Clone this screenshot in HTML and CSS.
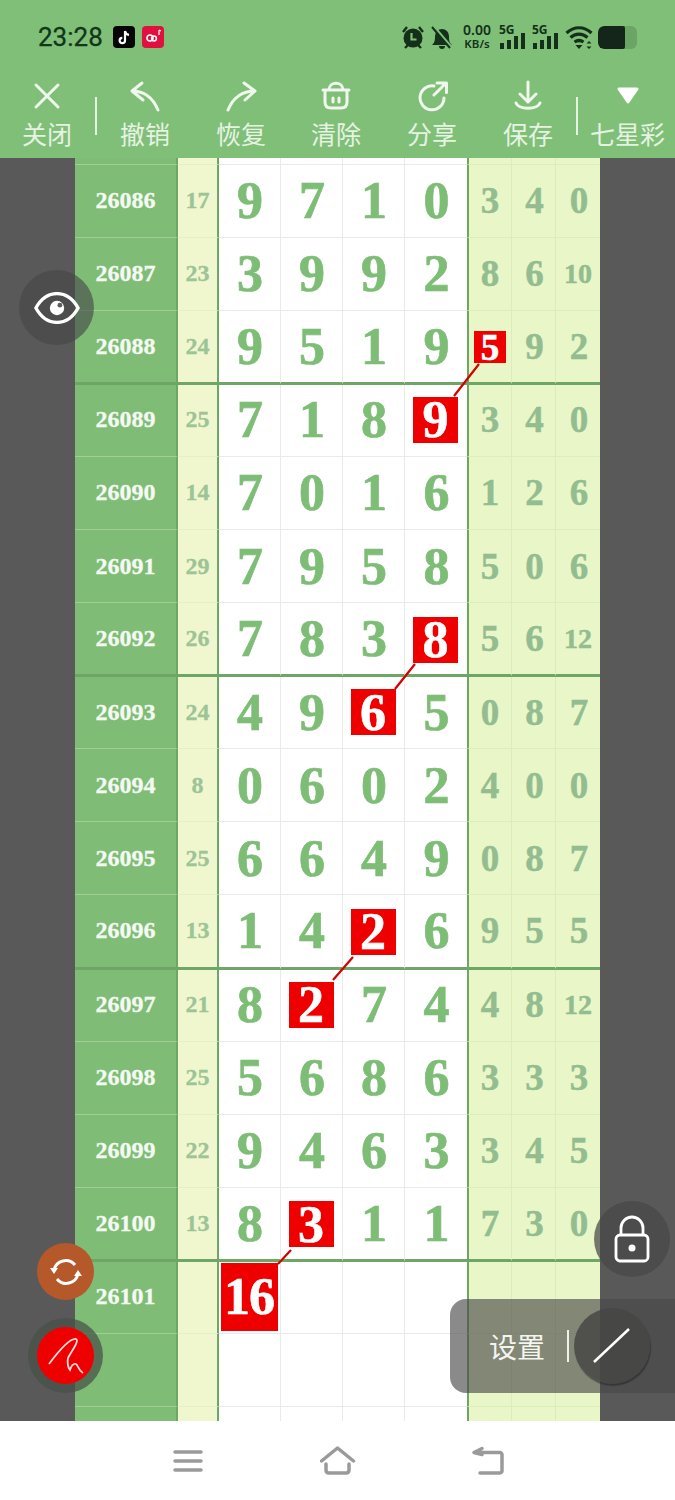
FILE: index.html
```html
<!DOCTYPE html>
<html lang="zh">
<head>
<meta charset="utf-8">
<title>七星彩</title>
<link rel="stylesheet" href="styles.css">
</head>
<body>
<div class="page">
  <header class="head">
    <div class="status">
      <span class="time">23:28</span>
      <svg class="app app-first" viewBox="0 0 22 22"><rect width="22" height="22" rx="4" fill="#050505"/><path d="M12 5v9.5a2.7 2.7 0 1 1-2.7-2.7M12 5c.3 2.3 1.7 3.6 4 3.9" fill="none" stroke="#fff" stroke-width="2.2"/></svg>
      <svg class="app" viewBox="0 0 22 22"><rect width="22" height="22" rx="4" fill="#e0103f"/><circle cx="8" cy="12" r="3" fill="none" stroke="#fff" stroke-width="1.5"/><circle cx="12" cy="12.5" r="2.4" fill="none" stroke="#fff" stroke-width="1.5"/><path d="M17 4v5M17 4l2 1" stroke="#fff" stroke-width="1.2" fill="none"/></svg>
      <div class="sys">
        <svg class="s-icon" viewBox="0 0 22 24"><circle cx="11" cy="13" r="9.500" fill="#14301a"/><path d="M9.500 8v6.500h5" stroke="#7fbf78" stroke-width="2.200" fill="none"/><path d="M1 7l4-5M21 7l-4-5M3 23l3-3M19 23l-3-3" stroke="#14301a" stroke-width="2.400"/></svg>
        <svg class="s-icon" viewBox="0 0 22 24"><path d="M1 20c3-3 3-5 3-9a7 7 0 0 1 14 0c0 4 0 6 3 9z" fill="#14301a"/><path d="M8 21h6c0 2-1 3-3 3s-3-1-3-3z" fill="#14301a"/><path d="M3 2l17 20" stroke="#7fbf78" stroke-width="3"/><path d="M1 2l18 21" stroke="#14301a" stroke-width="2"/></svg>
        <div class="speed"><span class="speed-n">0.00</span><span class="speed-u">KB/s</span></div>
        <div class="sig"><span class="sig-t">5G</span><svg class="sig-b" viewBox="0 0 27 16"><path d="M1 10h4v6H1zM8 7h4v9H8zM15 3h4v13h-4zM22 0h4v16h-4z" fill="#14301a"/></svg></div>
        <div class="sig"><span class="sig-t">5G</span><svg class="sig-b" viewBox="0 0 27 16"><path d="M1 10h4v6H1zM8 7h4v9H8zM15 3h4v13h-4zM22 0h4v16h-4z" fill="#14301a"/></svg></div>
        <svg class="wifi" viewBox="0 0 28 24"><path d="M1.500 8c7.500-7 17.500-7 25 0M5.500 12.500c5-4.500 12-4.500 17 0M9.500 17c3-2 6-2 9 0" fill="none" stroke="#14301a" stroke-width="3.200"/><path d="M10.500 20h7l-3.500 4z" fill="#14301a"/><path d="M24 16l2.500 2.500h-5zM24 24l2.500-2.500h-5z" fill="#14301a"/></svg>
        <div class="batt"><div class="batt-fill"></div></div>
      </div>
    </div>
    <nav class="tools">
      <div class="tool"><svg class="t-icon" viewBox="0 0 32 32"><path d="M5 5l22 22M27 5L5 27"/></svg><span class="t-label">关闭</span></div>
      <div class="sep"></div>
      <div class="tool"><svg class="t-icon" viewBox="0 0 32 32"><path d="M13 3L3 11l11 9M3 11c13 0 21 7 26 19"/></svg><span class="t-label">撤销</span></div>
      <div class="tool"><svg class="t-icon" viewBox="0 0 32 32"><path d="M19 3l11 8-10 9M30 11C16 11 8 18 3 30"/></svg><span class="t-label">恢复</span></div>
      <div class="tool"><svg class="t-icon" viewBox="0 0 32 32"><path d="M3 10H29M9 10c0-9 14-9 14 0M5 10v12c0 4 2 6 6 6h10c4 0 6-2 6-6V10M13 18v4M19 18v4"/></svg><span class="t-label">清除</span></div>
      <div class="tool"><svg class="t-icon" viewBox="0 0 32 32"><path d="M18 6A12 12 0 1 0 28 18M30 3L18 15M21 3h9.500v9.500"/></svg><span class="t-label">分享</span></div>
      <div class="tool"><svg class="t-icon" viewBox="0 0 32 32"><path d="M16 2v20M8 14l8 8 8-8M4 23c3 7 21 7 24 0"/></svg><span class="t-label">保存</span></div>
      <div class="sep sep-b"></div>
      <div class="tool"><svg class="t-icon solid" viewBox="0 0 32 32"><path d="M7 9h18l-9 13z"/></svg><span class="t-label">七星彩</span></div>
    </nav>
  </header>

  <main class="chart">
    <div class="side"></div>
    <div class="table">
      <div class="row top"><div class="id"></div><div class="sum"></div><div class="d"></div><div class="d"></div><div class="d"></div><div class="d"></div><div class="r"></div><div class="r"></div><div class="r"></div></div>
      <div class="row"><div class="id">26086</div><div class="sum">17</div><div class="d">9</div><div class="d">7</div><div class="d">1</div><div class="d">0</div><div class="r">3</div><div class="r">4</div><div class="r">0</div></div>
      <div class="row"><div class="id">26087</div><div class="sum">23</div><div class="d">3</div><div class="d">9</div><div class="d">9</div><div class="d">2</div><div class="r">8</div><div class="r">6</div><div class="r two">10</div></div>
      <div class="row thick"><div class="id">26088</div><div class="sum">24</div><div class="d">9</div><div class="d">5</div><div class="d">1</div><div class="d">9</div><div class="r"><span class="hit-s">5</span></div><div class="r">9</div><div class="r">2</div></div>
      <div class="row"><div class="id">26089</div><div class="sum">25</div><div class="d">7</div><div class="d">1</div><div class="d">8</div><div class="d"><span class="hit">9</span></div><div class="r">3</div><div class="r">4</div><div class="r">0</div></div>
      <div class="row"><div class="id">26090</div><div class="sum">14</div><div class="d">7</div><div class="d">0</div><div class="d">1</div><div class="d">6</div><div class="r">1</div><div class="r">2</div><div class="r">6</div></div>
      <div class="row"><div class="id">26091</div><div class="sum">29</div><div class="d">7</div><div class="d">9</div><div class="d">5</div><div class="d">8</div><div class="r">5</div><div class="r">0</div><div class="r">6</div></div>
      <div class="row thick"><div class="id">26092</div><div class="sum">26</div><div class="d">7</div><div class="d">8</div><div class="d">3</div><div class="d"><span class="hit">8</span></div><div class="r">5</div><div class="r">6</div><div class="r two">12</div></div>
      <div class="row"><div class="id">26093</div><div class="sum">24</div><div class="d">4</div><div class="d">9</div><div class="d"><span class="hit">6</span></div><div class="d">5</div><div class="r">0</div><div class="r">8</div><div class="r">7</div></div>
      <div class="row"><div class="id">26094</div><div class="sum">8</div><div class="d">0</div><div class="d">6</div><div class="d">0</div><div class="d">2</div><div class="r">4</div><div class="r">0</div><div class="r">0</div></div>
      <div class="row"><div class="id">26095</div><div class="sum">25</div><div class="d">6</div><div class="d">6</div><div class="d">4</div><div class="d">9</div><div class="r">0</div><div class="r">8</div><div class="r">7</div></div>
      <div class="row thick"><div class="id">26096</div><div class="sum">13</div><div class="d">1</div><div class="d">4</div><div class="d"><span class="hit">2</span></div><div class="d">6</div><div class="r">9</div><div class="r">5</div><div class="r">5</div></div>
      <div class="row"><div class="id">26097</div><div class="sum">21</div><div class="d">8</div><div class="d"><span class="hit">2</span></div><div class="d">7</div><div class="d">4</div><div class="r">4</div><div class="r">8</div><div class="r two">12</div></div>
      <div class="row"><div class="id">26098</div><div class="sum">25</div><div class="d">5</div><div class="d">6</div><div class="d">8</div><div class="d">6</div><div class="r">3</div><div class="r">3</div><div class="r">3</div></div>
      <div class="row"><div class="id">26099</div><div class="sum">22</div><div class="d">9</div><div class="d">4</div><div class="d">6</div><div class="d">3</div><div class="r">3</div><div class="r">4</div><div class="r">5</div></div>
      <div class="row thick"><div class="id">26100</div><div class="sum">13</div><div class="d">8</div><div class="d"><span class="hit">3</span></div><div class="d">1</div><div class="d">1</div><div class="r">7</div><div class="r">3</div><div class="r">0</div></div>
      <div class="row"><div class="id">26101</div><div class="sum"></div><div class="d"><span class="hit-b">16</span></div><div class="d"></div><div class="d"></div><div class="d"></div><div class="r"></div><div class="r"></div><div class="r"></div></div>
      <div class="row"><div class="id"></div><div class="sum"></div><div class="d"></div><div class="d"></div><div class="d"></div><div class="d"></div><div class="r"></div><div class="r"></div><div class="r"></div></div>
      <div class="row"><div class="id"></div><div class="sum"></div><div class="d"></div><div class="d"></div><div class="d"></div><div class="d"></div><div class="r"></div><div class="r"></div><div class="r"></div></div>
    </div>
    <div class="side"></div>
    <svg class="links" viewBox="0 0 675 1263"><path d="M479 206L454 238M415 506L395 531M353 799L333 822M291 1092L278 1106"/></svg>
  </main>

  <footer class="nav">
    <svg class="nav-icon" viewBox="0 0 36 36"><path d="M5 9h26M5 18h26M5 27h26"/></svg>
    <svg class="nav-icon" viewBox="0 0 36 36"><path d="M1.500 18L17.500 5l16 13M6 21v6c0 2 1 3 3 3h17c2 0 3-1 3-3v-6"/></svg>
    <svg class="nav-icon" viewBox="0 0 36 36"><path d="M6 9.500H32c1 0 2 1 2 2V28c0 1-1 2-2 2H12M14 5.500L6 9.500l8 2"/></svg>
  </footer>

  <div class="fab fab-eye"><svg viewBox="0 0 48 32" class="eye"><path d="M2 16C13-4 35-4 46 16 35 36 13 36 2 16z" fill="none" stroke="#fff" stroke-width="3.500"/><circle cx="24" cy="16" r="7.500" fill="#fff"/><circle cx="27" cy="13" r="2.500" fill="#5c5c5c"/></svg></div>
  <div class="fab fab-lock"><svg viewBox="0 0 36 48" class="lock"><path d="M7 20V13a11 11 0 0 1 22 0v7" fill="none" stroke="#fff" stroke-width="2.800"/><rect x="2" y="20" width="32" height="26" rx="4" fill="none" stroke="#fff" stroke-width="2.800"/><circle cx="18" cy="33" r="3.500" fill="#fff"/></svg></div>
  <div class="fab fab-sync"><svg viewBox="0 0 32 32" class="sync"><path d="M4 14A12 12 0 0 1 25 9M28 18A12 12 0 0 1 7 23" fill="none" stroke="#fff" stroke-width="3"/><path d="M0 12h8l-4 6zM32 20h-8l4-6z" fill="#fff"/></svg></div>
  <div class="fab fab-pen"><div class="pen-in"><svg viewBox="0 0 56 56" class="pen"><path d="M11 36C20 24 32 10 38 11c4 2-6 14-8 19-1 4 0 10 2 12 1-3 2-7 6-6 2 1 2 6 7 9" fill="none" stroke="#ffdcdc" stroke-width="1.800"/></svg></div></div>
  <div class="panel">
    <span class="panel-t">设置</span>
    <span class="panel-sep"></span>
    <div class="panel-btn"><svg viewBox="0 0 76 76" class="slash"><path d="M20 54L55 21" stroke="#fff" stroke-width="2.500"/></svg></div>
  </div>
</div>
</body>
</html>
```

FILE: styles.css
```css
* { box-sizing: border-box; }
html, body { margin: 0; padding: 0; }
body { background: #fff; font-family: "Noto Sans", "Noto Sans CJK SC", sans-serif; }
.page { position: relative; width: 675px; height: 1500px; overflow: hidden; display: flex; flex-direction: column; }

.head { height: 158px; background: #80bf78; flex: none; }
.status { height: 72px; padding: 0 38px; display: flex; align-items: center; }
.time { font: 400 26px Roboto, sans-serif; color: #12361a; line-height: 1; margin-top: 2px; width: 66px; -webkit-text-stroke: .3px #12361a; }
.app { width: 22px; height: 22px; margin-left: 7px; margin-top: 2px; }
.app-first { margin-left: 9px; }
.sys { margin-left: auto; display: flex; align-items: center; margin-top: 2px; }
.s-icon { width: 22px; height: 24px; margin-right: 7px; }
.speed { width: 30px; margin-left: 2px; margin-right: 7px; margin-top: -3px; display: flex; flex-direction: column; align-items: center; color: #14301a; font-family: "Noto Sans", sans-serif; line-height: 1; }
.speed-n { font-size: 14px; font-weight: 600; line-height: 15px; }
.speed-u { font-size: 11.500px; font-weight: 600; line-height: 13px; }
.sig { width: 27px; height: 24px; margin-right: 6px; position: relative; }
.sig-t { position: absolute; left: 0; top: -1px; font: 700 12px/12px "Noto Sans", sans-serif; color: #14301a; }
.sig-b { position: absolute; left: 0; bottom: 0; width: 27px; height: 16px; }
.wifi { width: 28px; height: 24px; margin-right: 5px; }
.batt { width: 39px; height: 23px; border-radius: 6px; background: #6aa565; overflow: hidden; }
.batt-fill { width: 27px; height: 100%; background: #14261a; border-radius: 6px 2px 2px 6px; }

.tools { height: 86px; display: grid; grid-template-columns: 94px 4px 94px 98px 92px 100px 92px 6px 95px; }
.tool { display: flex; flex-direction: column; align-items: center; padding-top: 8px; }
.t-icon { width: 32px; height: 32px; fill: none; stroke: #eff8ec; stroke-width: 3; stroke-linecap: round; stroke-linejoin: round; }
.t-icon.solid { fill: #fff; stroke: #fff; stroke-width: 3; }
.t-label { font: 400 25px/32px "Noto Sans CJK SC", sans-serif; color: #e6f3e3; margin-top: 5px; white-space: nowrap; }
.sep { width: 2px; height: 38px; margin-top: 25px; background: #e6f3e3; justify-self: center; }

.chart { position: relative; z-index: 0; height: 1263px; flex: none; display: flex; overflow: hidden; background: #595959; }
.side { flex: 1; }
.side:first-child { flex: none; width: 75px; }
.table { width: 525px; flex: none; display: flex; flex-direction: column; }
.row { display: grid; grid-template-columns: 103px 41px 62px 62px 62px 62px 45px 44px 44px; height: 73.1px; flex: none; }
.row.top { height: 6.500px; }
.row > div { display: flex; align-items: center; justify-content: center; font-family: "Liberation Serif", serif; font-weight: 700; border-bottom: 1px solid; }
.id { background: #7fbd77; color: #f4faf2; font-size: 24px; border-right: 2px solid #6ea666; border-bottom-color: #a0d098 !important; -webkit-text-stroke: .3px #f4faf2; }
.sum { background: #f0f7cf; color: #9cc496; font-size: 24px; border-right: 2px solid #6ea666; border-bottom-color: #e6efc5 !important; -webkit-text-stroke: .3px #9cc496; }
.d { background: #fff; color: #7dbd76; font-size: 52px; padding-left: 1px; border-right: 1px solid #e8ebe6; border-bottom-color: #eaeaea !important; -webkit-text-stroke: .7px #7dbd76; }
.d:nth-child(6) { border-right: 0; }
.r { background: #e9f7c8; color: #93bd90; font-size: 37px; border-right: 1px solid #dcecbc; border-bottom-color: #ddeebd !important; -webkit-text-stroke: .5px #93bd90; }
.r:nth-child(7) { border-left: 2px solid #6ea666; }
.r:nth-child(8) { padding-left: 2px; }
.r:last-child { border-right: 0; padding-left: 2px; }
.r.two { font-size: 28px; padding-left: 0; }
.row.thick { position: relative; z-index: 1; box-shadow: 0 1px 0 #6ea666; }
.row.thick > div { border-bottom: 2px solid #6ea666 !important; }
.hit, .hit-s, .hit-b { display: flex; align-items: center; justify-content: center; background: #ee0000; color: #fff; -webkit-text-stroke: .6px #fff; }
.hit { width: 45px; height: 46px; font-size: 52px; margin-left: -2px; }
.hit-s { width: 32px; height: 32px; font-size: 37px; }
.hit-b { width: 57px; height: 68px; font-size: 52px; letter-spacing: -1px; margin-left: -2px; }
.thick .hit, .thick .hit-s { margin-top: 2px; }
.links { position: absolute; left: 0; top: 0; z-index: 2; width: 675px; height: 1263px; pointer-events: none; fill: none; stroke: #d40000; stroke-width: 2.200; }

.nav { flex: 1; background: #fff; display: flex; }
.nav-icon { position: absolute; width: 36px; height: 36px; top: 1443px; fill: none; stroke: #9a9a9a; stroke-width: 3.500; stroke-linecap: round; stroke-linejoin: round; }
.nav-icon:nth-child(1) { left: 170px; }
.nav-icon:nth-child(2) { left: 320px; }
.nav-icon:nth-child(3) { left: 468px; }

.fab { position: absolute; border-radius: 50%; display: flex; align-items: center; justify-content: center; }
.fab-eye { left: 19px; top: 270px; width: 75px; height: 75px; background: rgba(70, 70, 70, .62); }
.eye { width: 46px; height: 32px; }
.fab-lock { left: 594px; top: 1201px; width: 76px; height: 76px; background: rgba(70, 70, 70, .72); }
.lock { width: 36px; height: 48px; }
.fab-sync { left: 37px; top: 1243px; width: 57px; height: 57px; background: #b5582a; }
.sync { width: 32px; height: 32px; }
.fab-pen { left: 28px; top: 1318px; width: 75px; height: 75px; background: rgba(70, 80, 70, .72); }
.pen-in { width: 57px; height: 57px; border-radius: 50%; background: #ee0000; display: flex; align-items: center; justify-content: center; }
.pen { width: 56px; height: 56px; }
.panel { position: absolute; left: 450px; top: 1299px; width: 225px; height: 94px; background: rgba(72, 72, 72, .64); border-radius: 16px 0 0 16px; display: flex; align-items: center; padding-left: 39px; }
.panel-t { font: 400 28px/1 "Noto Sans CJK SC", sans-serif; color: #f4f4f0; width: 57px; }
.panel-sep { width: 2px; height: 32px; background: #f0f0ea; margin-left: 21px; }
.panel-btn { width: 76px; height: 76px; border-radius: 50%; background: rgba(70, 70, 68, .82); box-shadow: 1px 2px 1px rgba(40, 40, 40, .6); margin-left: 5px; flex: none; }
.slash { width: 76px; height: 76px; display: block; }
```
